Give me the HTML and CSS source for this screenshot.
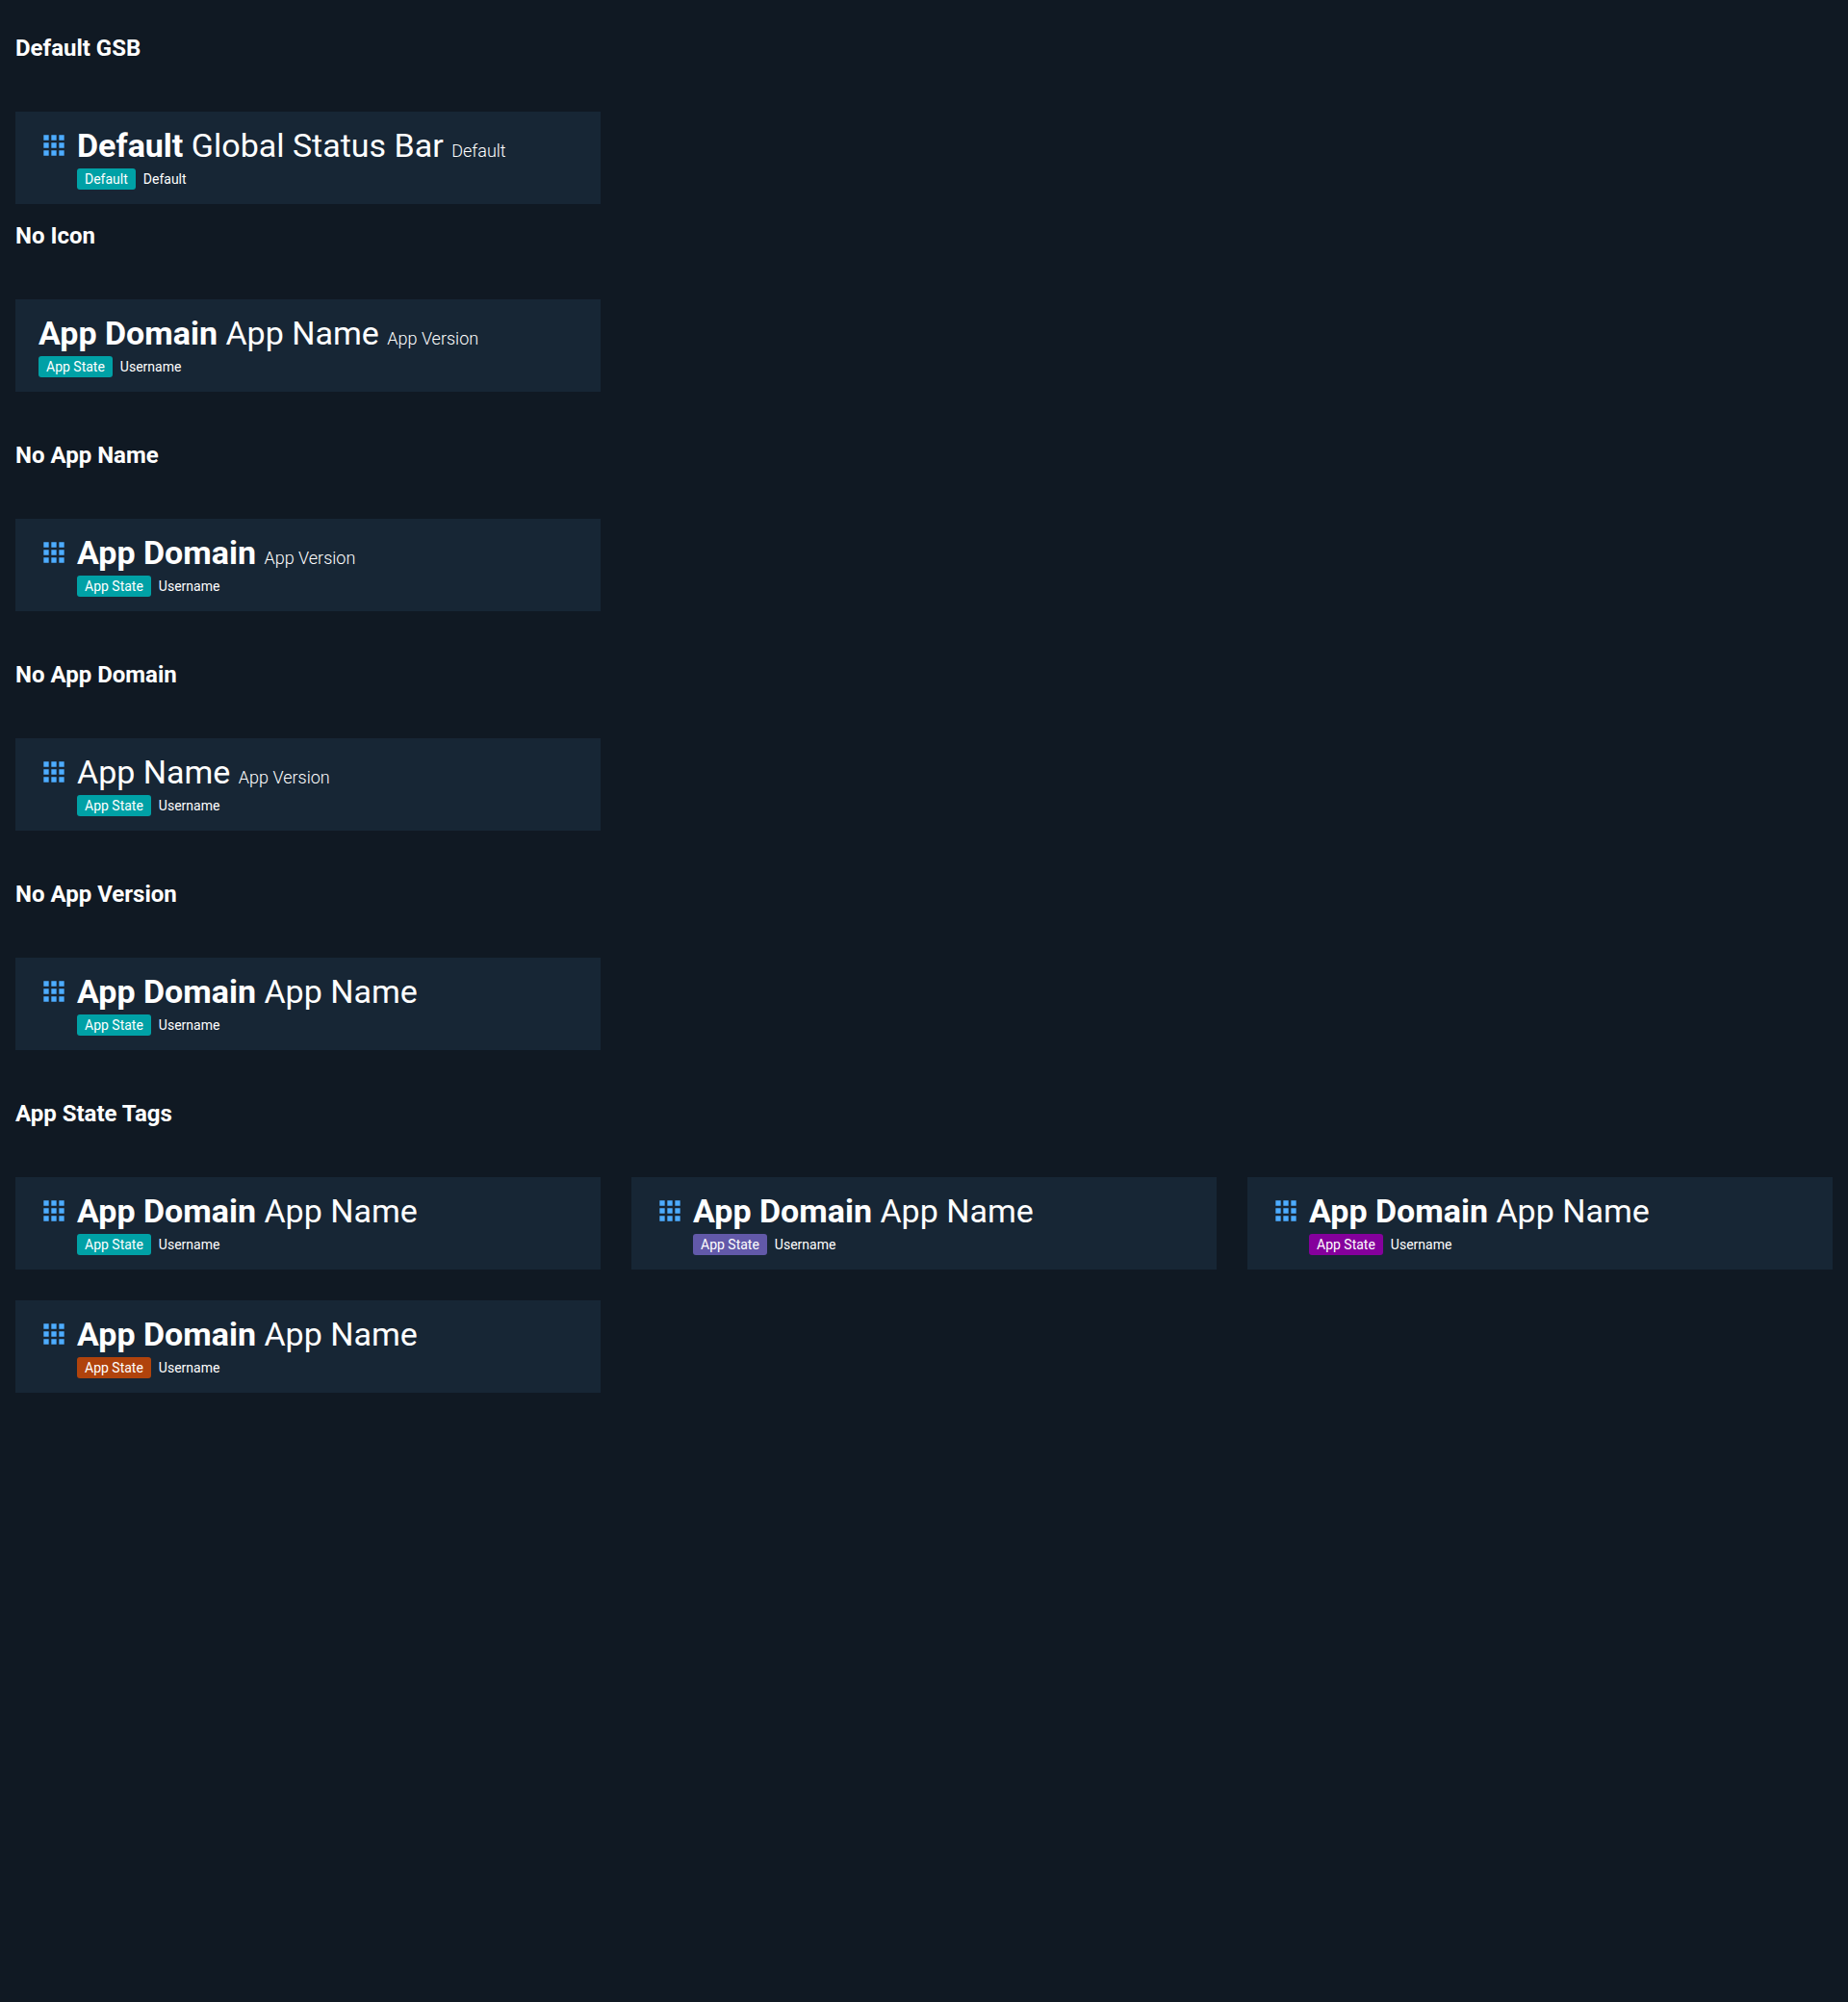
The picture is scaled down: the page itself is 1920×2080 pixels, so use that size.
FILE: index.html
```html
<!DOCTYPE html>
<html lang="en">
<head>
<meta charset="utf-8">
<meta name="viewport" content="width=device-width, initial-scale=1">
<title>Global Status Bar</title>
<link rel="stylesheet" href="styles.css">
</head>
<body>
<svg class="sprite" aria-hidden="true"><symbol id="apps" viewBox="0 0 24 24"><path d="M4 8h4V4H4v4zm6 12h4v-4h-4v4zm-6 0h4v-4H4v4zm0-6h4v-4H4v4zm6 0h4v-4h-4v4zm6-10v4h4V4h-4zm-6 4h4V4h-4v4zm6 6h4v-4h-4v4zm0 6h4v-4h-4v4z"/></symbol></svg>
<main>
<section class="section section-compact">
<h2>Default GSB</h2>
<div class="grid">
<header class="bar"><svg class="icon"><use href="#apps"/></svg><div class="info"><h1><b>Default</b> <span>Global Status Bar</span> <small>Default</small></h1><div class="meta"><span class="tag">Default</span><span>Default</span></div></div></header>
</div>
</section>
<section class="section">
<h2>No Icon</h2>
<div class="grid">
<header class="bar"><div class="info"><h1><b>App Domain</b> <span>App Name</span> <small>App Version</small></h1><div class="meta"><span class="tag">App State</span><span>Username</span></div></div></header>
</div>
</section>
<section class="section">
<h2>No App Name</h2>
<div class="grid">
<header class="bar"><svg class="icon"><use href="#apps"/></svg><div class="info"><h1><b>App Domain</b> <small>App Version</small></h1><div class="meta"><span class="tag">App State</span><span>Username</span></div></div></header>
</div>
</section>
<section class="section">
<h2>No App Domain</h2>
<div class="grid">
<header class="bar"><svg class="icon"><use href="#apps"/></svg><div class="info"><h1><span>App Name</span> <small>App Version</small></h1><div class="meta"><span class="tag">App State</span><span>Username</span></div></div></header>
</div>
</section>
<section class="section">
<h2>No App Version</h2>
<div class="grid">
<header class="bar"><svg class="icon"><use href="#apps"/></svg><div class="info"><h1><b>App Domain</b> <span>App Name</span></h1><div class="meta"><span class="tag">App State</span><span>Username</span></div></div></header>
</div>
</section>
<section class="section">
<h2>App State Tags</h2>
<div class="grid">
<header class="bar"><svg class="icon"><use href="#apps"/></svg><div class="info"><h1><b>App Domain</b> <span>App Name</span></h1><div class="meta"><span class="tag">App State</span><span>Username</span></div></div></header>
<header class="bar"><svg class="icon"><use href="#apps"/></svg><div class="info"><h1><b>App Domain</b> <span>App Name</span></h1><div class="meta"><span class="tag tag-violet">App State</span><span>Username</span></div></div></header>
<header class="bar"><svg class="icon"><use href="#apps"/></svg><div class="info"><h1><b>App Domain</b> <span>App Name</span></h1><div class="meta"><span class="tag tag-purple">App State</span><span>Username</span></div></div></header>
<header class="bar"><svg class="icon"><use href="#apps"/></svg><div class="info"><h1><b>App Domain</b> <span>App Name</span></h1><div class="meta"><span class="tag tag-orange">App State</span><span>Username</span></div></div></header>
</div>
</section>
</main>
</body>
</html>
```

FILE: styles.css
```css
* { box-sizing: border-box; }
body {
  margin: 0;
  min-height: 100vh;
  background: #101923;
  color: #fff;
  font-family: Roboto, sans-serif;
}
.sprite { display: none; }
main { padding: 16px; }
.section { margin-bottom: 48px; }
.section-compact { margin-bottom: 15px; }
h2 {
  margin: 0 0 48px;
  font-size: 24px;
  line-height: 36px;
  font-weight: 700;
}
.section-compact h2 { padding-top: 16px; }
.grid {
  display: grid;
  grid-template-columns: repeat(3, minmax(0, 1fr));
  gap: 32px;
}
.bar {
  display: flex;
  align-items: flex-start;
  min-height: 96px;
  padding: 14px 24px;
  background: #172635;
}
.icon {
  flex: none;
  width: 32px;
  height: 32px;
  margin: 5px 8px 0 0;
  fill: #4dacff;
}
h1 {
  margin: 0;
  font-size: 34px;
  line-height: 42px;
  font-weight: 400;
  white-space: nowrap;
}
h1 b { font-weight: 700; }
h1 small { font-size: 18px; line-height: 18px; font-weight: 300; }
.meta {
  display: flex;
  align-items: center;
  gap: 8px;
  margin-top: 3px;
  font-size: 14px;
  line-height: 22px;
}
.tag {
  padding: 0 8px;
  border-radius: 3px;
  background: #00a1a6;
}
.tag-violet { background: #6259a9; }
.tag-purple { background: #85009c; }
.tag-orange { background: #b0430c; }
```
